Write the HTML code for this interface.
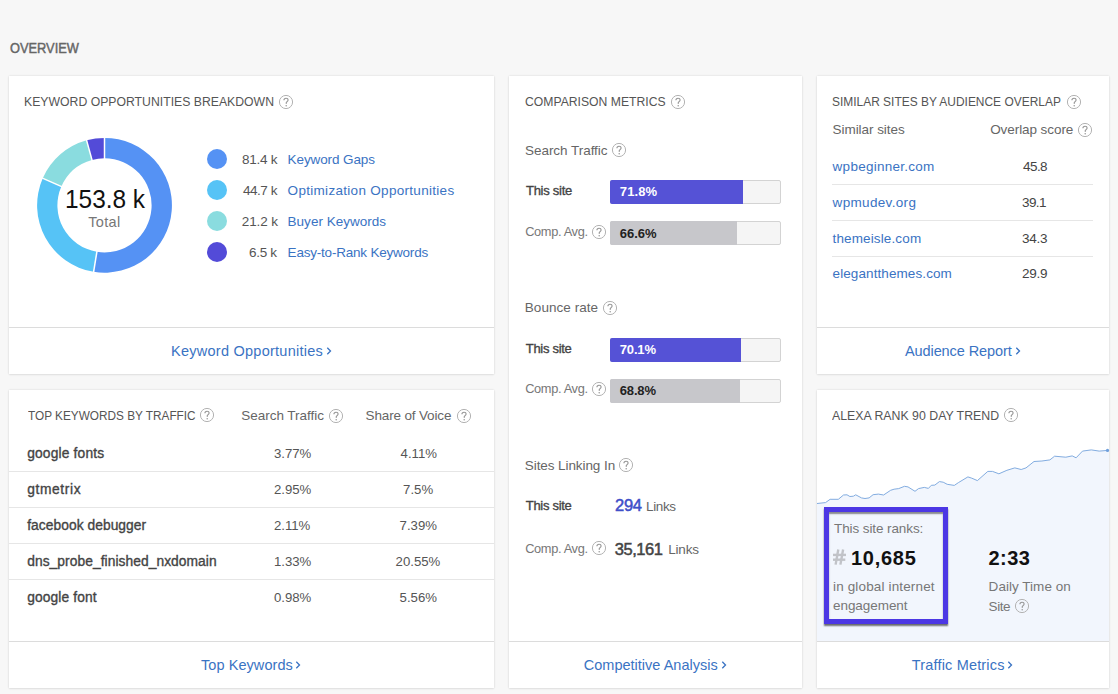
<!DOCTYPE html>
<html><head><meta charset="utf-8"><style>
html,body{margin:0;padding:0;}
body{width:1118px;height:694px;overflow:hidden;background:#f7f7f7;position:relative;font-family:"Liberation Sans",sans-serif;}
.abs{position:absolute;}
.t{position:absolute;white-space:pre;}
.card{position:absolute;background:#fff;box-shadow:0 0 2px rgba(0,0,0,0.13),0 1px 2px rgba(0,0,0,0.06);}
.hl{position:absolute;height:1px;background:#dcdcdc;}
.sep{position:absolute;height:1px;background:#e6e6e6;}
.bar{position:absolute;left:610px;width:169px;height:22px;background:#f5f5f5;border:1px solid #d3d3d3;border-radius:2px;}
.fill{position:absolute;left:-1px;top:-1px;height:24px;border-radius:2px 0 0 2px;}
.dot{position:absolute;width:20px;height:20px;border-radius:50%;}
</style></head><body>
<div class="card" style="left:9px;top:76px;width:485px;height:298px"></div>
<div class="card" style="left:509px;top:76px;width:293px;height:612px"></div>
<div class="card" style="left:817px;top:76px;width:292px;height:298px"></div>
<div class="card" style="left:9px;top:390px;width:485px;height:298px"></div>
<div class="card" style="left:817px;top:390px;width:292px;height:298px"></div>
<svg class="abs" width="1118" height="694" style="left:0;top:0"><path d="M817.0,503.5 L825.5,502.6 L830.1,499.3 L838.3,499.3 L843.5,495.0 L847.0,494.8 L849.9,496.5 L853.4,496.2 L855.7,494.8 L861.5,497.9 L865.0,498.5 L869.1,497.9 L873.1,494.7 L878.4,494.1 L883.6,495.0 L890.6,490.3 L894.1,489.2 L898.7,488.6 L904.5,486.3 L908.0,486.9 L915.0,491.3 L918.5,488.6 L924.3,487.4 L928.4,488.4 L931.3,485.3 L934.8,485.1 L939.4,481.6 L943.2,482.2 L947.2,484.3 L954.3,485.4 L958.3,482.7 L967.9,476.9 L971.8,478.2 L977.4,480.6 L987.8,471.4 L992.5,471.4 L998.9,473.8 L1006.9,470.3 L1014.8,467.9 L1021.2,469.5 L1026.0,467.9 L1034.0,461.5 L1041.9,461.0 L1049.9,459.9 L1054.6,456.2 L1065.8,457.2 L1072.2,455.9 L1076.1,457.8 L1082.5,451.1 L1091.3,449.9 L1099.2,451.1 L1108.0,450.4 L1109.0,450.4 L1109,641 L817,641 Z" fill="#f2f6fd"/><path d="M817.0,503.5 L825.5,502.6 L830.1,499.3 L838.3,499.3 L843.5,495.0 L847.0,494.8 L849.9,496.5 L853.4,496.2 L855.7,494.8 L861.5,497.9 L865.0,498.5 L869.1,497.9 L873.1,494.7 L878.4,494.1 L883.6,495.0 L890.6,490.3 L894.1,489.2 L898.7,488.6 L904.5,486.3 L908.0,486.9 L915.0,491.3 L918.5,488.6 L924.3,487.4 L928.4,488.4 L931.3,485.3 L934.8,485.1 L939.4,481.6 L943.2,482.2 L947.2,484.3 L954.3,485.4 L958.3,482.7 L967.9,476.9 L971.8,478.2 L977.4,480.6 L987.8,471.4 L992.5,471.4 L998.9,473.8 L1006.9,470.3 L1014.8,467.9 L1021.2,469.5 L1026.0,467.9 L1034.0,461.5 L1041.9,461.0 L1049.9,459.9 L1054.6,456.2 L1065.8,457.2 L1072.2,455.9 L1076.1,457.8 L1082.5,451.1 L1091.3,449.9 L1099.2,451.1 L1108.0,450.4 L1109.0,450.4" fill="none" stroke="#82ace0" stroke-width="1" stroke-linejoin="round"/><circle cx="1107.5" cy="450.4" r="1.6" fill="#6f9fdc"/></svg>
<div class="hl" style="left:9px;top:327px;width:485px"></div>
<div class="hl" style="left:817px;top:327px;width:292px"></div>
<div class="hl" style="left:509px;top:641px;width:293px"></div>
<div class="hl" style="left:9px;top:641px;width:485px"></div>
<div class="hl" style="left:817px;top:641px;width:292px"></div>
<svg class="abs" width="1118" height="694" style="left:0;top:0"><path d="M104.50,137.90 A67.4,67.4 0 1 1 93.61,271.81 L96.89,251.78 A47.1,47.1 0 1 0 104.50,158.20 Z" fill="#5592f4"/><path d="M93.61,271.81 A67.4,67.4 0 0 1 42.74,178.32 L61.34,186.44 A47.1,47.1 0 0 0 96.89,251.78 Z" fill="#56c3f6"/><path d="M42.74,178.32 A67.4,67.4 0 0 1 86.60,140.32 L91.99,159.89 A47.1,47.1 0 0 0 61.34,186.44 Z" fill="#8adcdf"/><path d="M86.60,140.32 A67.4,67.4 0 0 1 104.50,137.90 L104.50,158.20 A47.1,47.1 0 0 0 91.99,159.89 Z" fill="#534bd8"/><line x1="104.50" y1="159.20" x2="104.50" y2="136.90" stroke="#fff" stroke-width="1.5"/><line x1="97.05" y1="250.79" x2="93.45" y2="272.80" stroke="#fff" stroke-width="1.5"/><line x1="62.26" y1="186.84" x2="41.82" y2="177.92" stroke="#fff" stroke-width="1.5"/><line x1="92.26" y1="160.86" x2="86.34" y2="139.36" stroke="#fff" stroke-width="1.5"/></svg>
<div class="dot" style="left:207px;top:149.3px;background:#5592f4"></div>
<div class="dot" style="left:207px;top:180.3px;background:#56c3f6"></div>
<div class="dot" style="left:207px;top:211.3px;background:#8adcdf"></div>
<div class="dot" style="left:207px;top:242.3px;background:#534bd8"></div>
<div class="bar" style="top:180px"><div class="fill" style="width:133px;background:#5552d6"></div></div>
<div class="bar" style="top:221px"><div class="fill" style="width:127px;background:#c7c7cb"></div></div>
<div class="bar" style="top:338px"><div class="fill" style="width:131px;background:#5552d6"></div></div>
<div class="bar" style="top:379px"><div class="fill" style="width:130px;background:#c7c7cb"></div></div>
<div class="sep" style="left:832px;top:184px;width:261px"></div>
<div class="sep" style="left:832px;top:220px;width:261px"></div>
<div class="sep" style="left:832px;top:256px;width:261px"></div>
<div class="sep" style="left:9px;top:471px;width:485px"></div>
<div class="sep" style="left:9px;top:507px;width:485px"></div>
<div class="sep" style="left:9px;top:543px;width:485px"></div>
<div class="sep" style="left:9px;top:579px;width:485px"></div>
<div class="abs" style="left:824px;top:507px;width:114px;height:107px;border:5px solid #4c37e4;box-shadow:0 2px 1.5px rgba(0,0,0,0.55), inset 0 2px 1.5px rgba(0,0,0,0.45)"></div>
<svg class="abs" style="left:278.00px;top:93.50px" width="16" height="16" viewBox="0 0 16 16"><circle cx="8" cy="8" r="6.6" fill="none" stroke="#b3b3b3" stroke-width="1"/><path d="M5.9,6.3 C5.9,4.9 6.9,4.2 8,4.2 C9.2,4.2 10.1,5 10.1,6.1 C10.1,7.3 8.8,7.6 8.3,8.5 L8.2,9.9" fill="none" stroke="#969696" stroke-width="1.1"/><circle cx="8.2" cy="11.7" r="0.75" fill="#969696"/></svg>
<svg class="abs" style="left:669.90px;top:93.80px" width="16" height="16" viewBox="0 0 16 16"><circle cx="8" cy="8" r="6.6" fill="none" stroke="#b3b3b3" stroke-width="1"/><path d="M5.9,6.3 C5.9,4.9 6.9,4.2 8,4.2 C9.2,4.2 10.1,5 10.1,6.1 C10.1,7.3 8.8,7.6 8.3,8.5 L8.2,9.9" fill="none" stroke="#969696" stroke-width="1.1"/><circle cx="8.2" cy="11.7" r="0.75" fill="#969696"/></svg>
<svg class="abs" style="left:610.90px;top:142.20px" width="16" height="16" viewBox="0 0 16 16"><circle cx="8" cy="8" r="6.6" fill="none" stroke="#b3b3b3" stroke-width="1"/><path d="M5.9,6.3 C5.9,4.9 6.9,4.2 8,4.2 C9.2,4.2 10.1,5 10.1,6.1 C10.1,7.3 8.8,7.6 8.3,8.5 L8.2,9.9" fill="none" stroke="#969696" stroke-width="1.1"/><circle cx="8.2" cy="11.7" r="0.75" fill="#969696"/></svg>
<svg class="abs" style="left:590.90px;top:224.30px" width="16" height="16" viewBox="0 0 16 16"><circle cx="8" cy="8" r="6.6" fill="none" stroke="#b3b3b3" stroke-width="1"/><path d="M5.9,6.3 C5.9,4.9 6.9,4.2 8,4.2 C9.2,4.2 10.1,5 10.1,6.1 C10.1,7.3 8.8,7.6 8.3,8.5 L8.2,9.9" fill="none" stroke="#969696" stroke-width="1.1"/><circle cx="8.2" cy="11.7" r="0.75" fill="#969696"/></svg>
<svg class="abs" style="left:601.80px;top:299.90px" width="16" height="16" viewBox="0 0 16 16"><circle cx="8" cy="8" r="6.6" fill="none" stroke="#b3b3b3" stroke-width="1"/><path d="M5.9,6.3 C5.9,4.9 6.9,4.2 8,4.2 C9.2,4.2 10.1,5 10.1,6.1 C10.1,7.3 8.8,7.6 8.3,8.5 L8.2,9.9" fill="none" stroke="#969696" stroke-width="1.1"/><circle cx="8.2" cy="11.7" r="0.75" fill="#969696"/></svg>
<svg class="abs" style="left:591.10px;top:380.90px" width="16" height="16" viewBox="0 0 16 16"><circle cx="8" cy="8" r="6.6" fill="none" stroke="#b3b3b3" stroke-width="1"/><path d="M5.9,6.3 C5.9,4.9 6.9,4.2 8,4.2 C9.2,4.2 10.1,5 10.1,6.1 C10.1,7.3 8.8,7.6 8.3,8.5 L8.2,9.9" fill="none" stroke="#969696" stroke-width="1.1"/><circle cx="8.2" cy="11.7" r="0.75" fill="#969696"/></svg>
<svg class="abs" style="left:617.90px;top:457.20px" width="16" height="16" viewBox="0 0 16 16"><circle cx="8" cy="8" r="6.6" fill="none" stroke="#b3b3b3" stroke-width="1"/><path d="M5.9,6.3 C5.9,4.9 6.9,4.2 8,4.2 C9.2,4.2 10.1,5 10.1,6.1 C10.1,7.3 8.8,7.6 8.3,8.5 L8.2,9.9" fill="none" stroke="#969696" stroke-width="1.1"/><circle cx="8.2" cy="11.7" r="0.75" fill="#969696"/></svg>
<svg class="abs" style="left:591.10px;top:540.40px" width="16" height="16" viewBox="0 0 16 16"><circle cx="8" cy="8" r="6.6" fill="none" stroke="#b3b3b3" stroke-width="1"/><path d="M5.9,6.3 C5.9,4.9 6.9,4.2 8,4.2 C9.2,4.2 10.1,5 10.1,6.1 C10.1,7.3 8.8,7.6 8.3,8.5 L8.2,9.9" fill="none" stroke="#969696" stroke-width="1.1"/><circle cx="8.2" cy="11.7" r="0.75" fill="#969696"/></svg>
<svg class="abs" style="left:1065.80px;top:94.00px" width="16" height="16" viewBox="0 0 16 16"><circle cx="8" cy="8" r="6.6" fill="none" stroke="#b3b3b3" stroke-width="1"/><path d="M5.9,6.3 C5.9,4.9 6.9,4.2 8,4.2 C9.2,4.2 10.1,5 10.1,6.1 C10.1,7.3 8.8,7.6 8.3,8.5 L8.2,9.9" fill="none" stroke="#969696" stroke-width="1.1"/><circle cx="8.2" cy="11.7" r="0.75" fill="#969696"/></svg>
<svg class="abs" style="left:1076.90px;top:121.70px" width="16" height="16" viewBox="0 0 16 16"><circle cx="8" cy="8" r="6.6" fill="none" stroke="#b3b3b3" stroke-width="1"/><path d="M5.9,6.3 C5.9,4.9 6.9,4.2 8,4.2 C9.2,4.2 10.1,5 10.1,6.1 C10.1,7.3 8.8,7.6 8.3,8.5 L8.2,9.9" fill="none" stroke="#969696" stroke-width="1.1"/><circle cx="8.2" cy="11.7" r="0.75" fill="#969696"/></svg>
<svg class="abs" style="left:199.00px;top:407.40px" width="16" height="16" viewBox="0 0 16 16"><circle cx="8" cy="8" r="6.6" fill="none" stroke="#b3b3b3" stroke-width="1"/><path d="M5.9,6.3 C5.9,4.9 6.9,4.2 8,4.2 C9.2,4.2 10.1,5 10.1,6.1 C10.1,7.3 8.8,7.6 8.3,8.5 L8.2,9.9" fill="none" stroke="#969696" stroke-width="1.1"/><circle cx="8.2" cy="11.7" r="0.75" fill="#969696"/></svg>
<svg class="abs" style="left:328.30px;top:407.50px" width="16" height="16" viewBox="0 0 16 16"><circle cx="8" cy="8" r="6.6" fill="none" stroke="#b3b3b3" stroke-width="1"/><path d="M5.9,6.3 C5.9,4.9 6.9,4.2 8,4.2 C9.2,4.2 10.1,5 10.1,6.1 C10.1,7.3 8.8,7.6 8.3,8.5 L8.2,9.9" fill="none" stroke="#969696" stroke-width="1.1"/><circle cx="8.2" cy="11.7" r="0.75" fill="#969696"/></svg>
<svg class="abs" style="left:456.20px;top:407.50px" width="16" height="16" viewBox="0 0 16 16"><circle cx="8" cy="8" r="6.6" fill="none" stroke="#b3b3b3" stroke-width="1"/><path d="M5.9,6.3 C5.9,4.9 6.9,4.2 8,4.2 C9.2,4.2 10.1,5 10.1,6.1 C10.1,7.3 8.8,7.6 8.3,8.5 L8.2,9.9" fill="none" stroke="#969696" stroke-width="1.1"/><circle cx="8.2" cy="11.7" r="0.75" fill="#969696"/></svg>
<svg class="abs" style="left:1002.80px;top:407.40px" width="16" height="16" viewBox="0 0 16 16"><circle cx="8" cy="8" r="6.6" fill="none" stroke="#b3b3b3" stroke-width="1"/><path d="M5.9,6.3 C5.9,4.9 6.9,4.2 8,4.2 C9.2,4.2 10.1,5 10.1,6.1 C10.1,7.3 8.8,7.6 8.3,8.5 L8.2,9.9" fill="none" stroke="#969696" stroke-width="1.1"/><circle cx="8.2" cy="11.7" r="0.75" fill="#969696"/></svg>
<svg class="abs" style="left:1013.90px;top:598.00px" width="16" height="16" viewBox="0 0 16 16"><circle cx="8" cy="8" r="6.6" fill="none" stroke="#b3b3b3" stroke-width="1"/><path d="M5.9,6.3 C5.9,4.9 6.9,4.2 8,4.2 C9.2,4.2 10.1,5 10.1,6.1 C10.1,7.3 8.8,7.6 8.3,8.5 L8.2,9.9" fill="none" stroke="#969696" stroke-width="1.1"/><circle cx="8.2" cy="11.7" r="0.75" fill="#969696"/></svg>
<svg class="abs" style="left:325.90px;top:346.20px" width="7" height="10" viewBox="0 0 7 10"><polyline points="1.3,1.8 4.5,5 1.3,8.2" fill="none" stroke="#3a73c3" stroke-width="1.3"/></svg>
<svg class="abs" style="left:1015.10px;top:346.20px" width="7" height="10" viewBox="0 0 7 10"><polyline points="1.3,1.8 4.5,5 1.3,8.2" fill="none" stroke="#3a73c3" stroke-width="1.3"/></svg>
<svg class="abs" style="left:295.40px;top:660.30px" width="7" height="10" viewBox="0 0 7 10"><polyline points="1.3,1.8 4.5,5 1.3,8.2" fill="none" stroke="#3a73c3" stroke-width="1.3"/></svg>
<svg class="abs" style="left:720.80px;top:660.20px" width="7" height="10" viewBox="0 0 7 10"><polyline points="1.3,1.8 4.5,5 1.3,8.2" fill="none" stroke="#3a73c3" stroke-width="1.3"/></svg>
<svg class="abs" style="left:1007.10px;top:660.20px" width="7" height="10" viewBox="0 0 7 10"><polyline points="1.3,1.8 4.5,5 1.3,8.2" fill="none" stroke="#3a73c3" stroke-width="1.3"/></svg>
<svg class="abs" style="left:830px;top:546px" width="20" height="22" viewBox="0 0 20 22"><g stroke="#c1c3c8" stroke-width="2.4" fill="none"><line x1="8.3" y1="3.5" x2="5.6" y2="18.6"/><line x1="13.1" y1="3.5" x2="10.4" y2="18.6"/><line x1="3" y1="8.9" x2="16" y2="8.9"/><line x1="3" y1="13.7" x2="15.3" y2="13.7"/></g></svg>
<span class="t" style="left:10.00px;top:41.38px;font-size:14.2px;line-height:14.2px;color:#666;transform:scaleX(0.9039);transform-origin:0 0;-webkit-text-stroke:0.45px #666;">OVERVIEW</span>
<span class="t" style="left:24.00px;top:95.23px;font-size:13.2px;line-height:13.2px;color:#555;transform:scaleX(0.9280);transform-origin:0 0;">KEYWORD OPPORTUNITIES BREAKDOWN</span>
<span class="t" style="left:65.20px;top:186.94px;font-size:25px;line-height:25px;color:#111;transform:scaleX(0.9763);transform-origin:0 0;">153.8 k</span>
<span class="t" style="left:88.20px;top:214.83px;font-size:14.5px;line-height:14.5px;color:#777;letter-spacing:0.350px;">Total</span>
<span class="t" style="left:242.00px;top:152.87px;font-size:13.5px;line-height:13.5px;color:#555;letter-spacing:-0.280px;">81.4 k</span>
<span class="t" style="left:287.60px;top:152.87px;font-size:13.5px;line-height:13.5px;color:#3a73c3;letter-spacing:-0.109px;">Keyword Gaps</span>
<span class="t" style="left:243.00px;top:183.92px;font-size:13.5px;line-height:13.5px;color:#555;letter-spacing:-0.480px;">44.7 k</span>
<span class="t" style="left:287.60px;top:183.92px;font-size:13.5px;line-height:13.5px;color:#3a73c3;letter-spacing:0.300px;">Optimization Opportunities</span>
<span class="t" style="left:241.80px;top:214.97px;font-size:13.5px;line-height:13.5px;color:#555;letter-spacing:-0.100px;">21.2 k</span>
<span class="t" style="left:287.60px;top:214.97px;font-size:13.5px;line-height:13.5px;color:#3a73c3;letter-spacing:0.008px;">Buyer Keywords</span>
<span class="t" style="left:249.00px;top:246.02px;font-size:13.5px;line-height:13.5px;color:#555;letter-spacing:-0.288px;">6.5 k</span>
<span class="t" style="left:287.60px;top:246.02px;font-size:13.5px;line-height:13.5px;color:#3a73c3;letter-spacing:-0.210px;">Easy-to-Rank Keywords</span>
<span class="t" style="left:171.00px;top:343.83px;font-size:14.5px;line-height:14.5px;color:#3a73c3;letter-spacing:0.255px;">Keyword Opportunities</span>
<span class="t" style="left:525.00px;top:95.23px;font-size:13.2px;line-height:13.2px;color:#555;transform:scaleX(0.9239);transform-origin:0 0;">COMPARISON METRICS</span>
<span class="t" style="left:525.00px;top:143.97px;font-size:13.5px;line-height:13.5px;color:#666;letter-spacing:-0.038px;">Search Traffic</span>
<span class="t" style="left:526.00px;top:184.40px;font-size:13px;line-height:13px;color:#444;letter-spacing:-0.275px;-webkit-text-stroke:0.35px #444;">This site</span>
<span class="t" style="left:619.80px;top:185.40px;font-size:13px;line-height:13px;color:#fff;font-weight:700;letter-spacing:0.100px;">71.8%</span>
<span class="t" style="left:525.20px;top:225.56px;font-size:12.8px;line-height:12.8px;color:#777;letter-spacing:-0.344px;">Comp. Avg.</span>
<span class="t" style="left:619.80px;top:226.60px;font-size:13px;line-height:13px;color:#222;font-weight:700;letter-spacing:-0.025px;">66.6%</span>
<span class="t" style="left:524.80px;top:300.77px;font-size:13.5px;line-height:13.5px;color:#666;letter-spacing:0.050px;">Bounce rate</span>
<span class="t" style="left:525.80px;top:342.20px;font-size:13px;line-height:13px;color:#444;letter-spacing:-0.300px;-webkit-text-stroke:0.35px #444;">This site</span>
<span class="t" style="left:619.80px;top:343.30px;font-size:13px;line-height:13px;color:#fff;font-weight:700;letter-spacing:-0.175px;">70.1%</span>
<span class="t" style="left:525.20px;top:383.36px;font-size:12.8px;line-height:12.8px;color:#777;letter-spacing:-0.344px;">Comp. Avg.</span>
<span class="t" style="left:619.80px;top:384.10px;font-size:13px;line-height:13px;color:#222;font-weight:700;letter-spacing:-0.175px;">68.8%</span>
<span class="t" style="left:524.80px;top:458.67px;font-size:13.5px;line-height:13.5px;color:#666;letter-spacing:-0.080px;">Sites Linking In</span>
<span class="t" style="left:525.80px;top:499.20px;font-size:13px;line-height:13px;color:#444;letter-spacing:-0.300px;-webkit-text-stroke:0.35px #444;">This site</span>
<span class="t" style="left:615.00px;top:496.93px;font-size:16.5px;line-height:16.5px;color:#3f4fc9;letter-spacing:-0.250px;-webkit-text-stroke:0.5px #3f4fc9;">294</span>
<span class="t" style="left:646.00px;top:499.77px;font-size:13.5px;line-height:13.5px;color:#666;letter-spacing:-0.375px;">Links</span>
<span class="t" style="left:525.20px;top:542.96px;font-size:12.8px;line-height:12.8px;color:#777;letter-spacing:-0.344px;">Comp. Avg.</span>
<span class="t" style="left:614.80px;top:540.53px;font-size:16.5px;line-height:16.5px;color:#444;letter-spacing:-0.460px;-webkit-text-stroke:0.5px #444;">35,161</span>
<span class="t" style="left:668.20px;top:543.37px;font-size:13.5px;line-height:13.5px;color:#666;letter-spacing:-0.175px;">Links</span>
<span class="t" style="left:583.80px;top:658.03px;font-size:14.5px;line-height:14.5px;color:#3a73c3;letter-spacing:0.005px;">Competitive Analysis</span>
<span class="t" style="left:831.60px;top:95.33px;font-size:13.2px;line-height:13.2px;color:#555;transform:scaleX(0.9060);transform-origin:0 0;">SIMILAR SITES BY AUDIENCE OVERLAP</span>
<span class="t" style="left:832.60px;top:123.17px;font-size:13.5px;line-height:13.5px;color:#666;letter-spacing:-0.058px;">Similar sites</span>
<span class="t" style="left:990.20px;top:123.17px;font-size:13.5px;line-height:13.5px;color:#666;letter-spacing:-0.075px;">Overlap score</span>
<span class="t" style="left:832.60px;top:159.87px;font-size:13.5px;line-height:13.5px;color:#3a73c3;letter-spacing:0.262px;">wpbeginner.com</span>
<span class="t" style="left:1023.00px;top:159.87px;font-size:13.5px;line-height:13.5px;color:#444;letter-spacing:-0.567px;">45.8</span>
<span class="t" style="left:832.60px;top:195.72px;font-size:13.5px;line-height:13.5px;color:#3a73c3;letter-spacing:0.330px;">wpmudev.org</span>
<span class="t" style="left:1022.00px;top:195.72px;font-size:13.5px;line-height:13.5px;color:#444;letter-spacing:-0.600px;">39.1</span>
<span class="t" style="left:832.60px;top:231.57px;font-size:13.5px;line-height:13.5px;color:#3a73c3;letter-spacing:0.125px;">themeisle.com</span>
<span class="t" style="left:1022.00px;top:231.57px;font-size:13.5px;line-height:13.5px;color:#444;letter-spacing:-0.233px;">34.3</span>
<span class="t" style="left:832.60px;top:267.42px;font-size:13.5px;line-height:13.5px;color:#3a73c3;letter-spacing:0.088px;">elegantthemes.com</span>
<span class="t" style="left:1022.00px;top:267.42px;font-size:13.5px;line-height:13.5px;color:#444;letter-spacing:-0.233px;">29.9</span>
<span class="t" style="left:905.00px;top:343.93px;font-size:14.5px;line-height:14.5px;color:#3a73c3;letter-spacing:-0.093px;">Audience Report</span>
<span class="t" style="left:28.20px;top:409.23px;font-size:13.2px;line-height:13.2px;color:#555;transform:scaleX(0.8947);transform-origin:0 0;">TOP KEYWORDS BY TRAFFIC</span>
<span class="t" style="left:241.20px;top:409.07px;font-size:13.5px;line-height:13.5px;color:#666;letter-spacing:-0.015px;">Search Traffic</span>
<span class="t" style="left:365.60px;top:409.07px;font-size:13.5px;line-height:13.5px;color:#666;letter-spacing:-0.154px;">Share of Voice</span>
<span class="t" style="left:27.20px;top:446.82px;font-size:13.8px;line-height:13.8px;color:#444;letter-spacing:0.164px;-webkit-text-stroke:0.35px #444;">google fonts</span>
<span class="t" style="left:273.90px;top:447.33px;font-size:13.2px;line-height:13.2px;color:#555;">3.77%</span>
<span class="t" style="left:400.60px;top:447.33px;font-size:13.2px;line-height:13.2px;color:#555;">4.11%</span>
<span class="t" style="left:27.20px;top:482.77px;font-size:13.8px;line-height:13.8px;color:#444;letter-spacing:0.614px;-webkit-text-stroke:0.35px #444;">gtmetrix</span>
<span class="t" style="left:273.90px;top:483.28px;font-size:13.2px;line-height:13.2px;color:#555;">2.95%</span>
<span class="t" style="left:403.10px;top:483.28px;font-size:13.2px;line-height:13.2px;color:#555;">7.5%</span>
<span class="t" style="left:27.20px;top:518.72px;font-size:13.8px;line-height:13.8px;color:#444;letter-spacing:0.050px;-webkit-text-stroke:0.35px #444;">facebook debugger</span>
<span class="t" style="left:273.90px;top:519.23px;font-size:13.2px;line-height:13.2px;color:#555;">2.11%</span>
<span class="t" style="left:399.60px;top:519.23px;font-size:13.2px;line-height:13.2px;color:#555;">7.39%</span>
<span class="t" style="left:27.20px;top:554.67px;font-size:13.8px;line-height:13.8px;color:#444;letter-spacing:0.058px;-webkit-text-stroke:0.35px #444;">dns_probe_finished_nxdomain</span>
<span class="t" style="left:273.90px;top:555.18px;font-size:13.2px;line-height:13.2px;color:#555;">1.33%</span>
<span class="t" style="left:395.60px;top:555.18px;font-size:13.2px;line-height:13.2px;color:#555;">20.55%</span>
<span class="t" style="left:27.20px;top:590.62px;font-size:13.8px;line-height:13.8px;color:#444;letter-spacing:0.120px;-webkit-text-stroke:0.35px #444;">google font</span>
<span class="t" style="left:273.90px;top:591.13px;font-size:13.2px;line-height:13.2px;color:#555;">0.98%</span>
<span class="t" style="left:399.60px;top:591.13px;font-size:13.2px;line-height:13.2px;color:#555;">5.56%</span>
<span class="t" style="left:201.00px;top:657.83px;font-size:14.5px;line-height:14.5px;color:#3a73c3;letter-spacing:0.064px;">Top Keywords</span>
<span class="t" style="left:832.40px;top:409.23px;font-size:13.2px;line-height:13.2px;color:#555;transform:scaleX(0.9341);transform-origin:0 0;">ALEXA RANK 90 DAY TREND</span>
<span class="t" style="left:834.00px;top:522.47px;font-size:13.5px;line-height:13.5px;color:#777;letter-spacing:-0.100px;">This site ranks:</span>
<span class="t" style="left:851.00px;top:547.67px;font-size:20px;line-height:20px;color:#111;font-weight:700;letter-spacing:0.720px;">10,685</span>
<span class="t" style="left:833.00px;top:579.97px;font-size:13.5px;line-height:13.5px;color:#777;letter-spacing:0.147px;">in global internet</span>
<span class="t" style="left:833.00px;top:599.47px;font-size:13.5px;line-height:13.5px;color:#777;letter-spacing:-0.056px;">engagement</span>
<span class="t" style="left:988.60px;top:547.67px;font-size:20px;line-height:20px;color:#111;font-weight:700;letter-spacing:0.400px;">2:33</span>
<span class="t" style="left:988.60px;top:579.87px;font-size:13.5px;line-height:13.5px;color:#777;letter-spacing:0.033px;">Daily Time on</span>
<span class="t" style="left:988.60px;top:599.77px;font-size:13.5px;line-height:13.5px;color:#777;letter-spacing:-0.433px;">Site</span>
<span class="t" style="left:911.80px;top:657.93px;font-size:14.5px;line-height:14.5px;color:#3a73c3;letter-spacing:0.171px;">Traffic Metrics</span>
</body></html>
